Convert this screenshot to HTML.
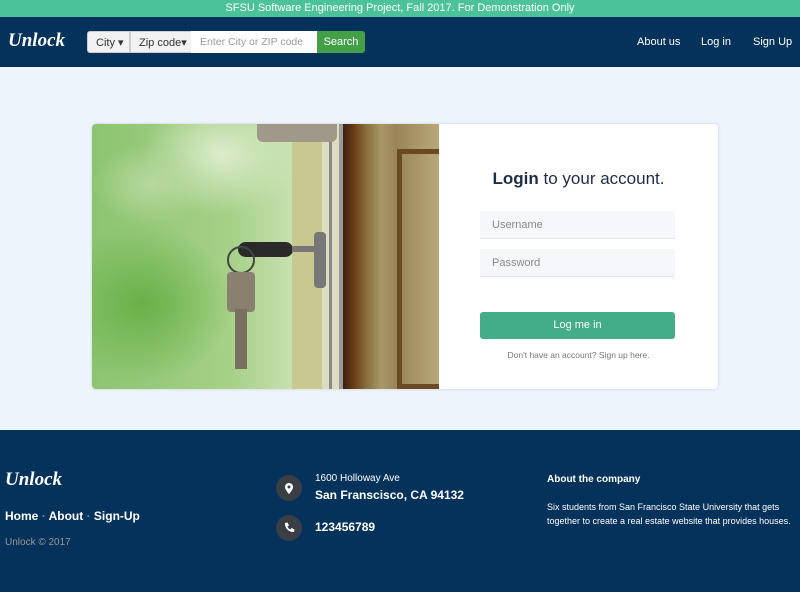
<!DOCTYPE html>
<html><head><style>
*{margin:0;padding:0;box-sizing:border-box}
body{width:800px;height:592px;overflow:hidden;font-family:"Liberation Sans",sans-serif;background:#eef4fb;position:relative}
.top{position:absolute;left:0;top:0;width:800px;height:17px;background:#4cc29a;color:#fff;font-size:11px;text-align:center;line-height:17px}
.nav{position:absolute;left:0;top:17px;width:800px;height:50px;background:#05325a;border-bottom:1px solid #0a2846}
.logo{position:absolute;font-family:"Liberation Serif",serif;font-style:italic;font-weight:bold;color:#fff;font-size:19px}
.sb{position:absolute;top:14px;height:22px;font-size:11px;line-height:22px}
.nav a{position:absolute;top:19px;color:#fff;font-size:11px;text-decoration:none}
.card{position:absolute;left:92px;top:124px;width:626px;height:265px;background:#fff;border-radius:4px;box-shadow:0 0 3px rgba(0,0,0,.15);overflow:hidden}
.img{position:absolute;left:0;top:0;width:347px;height:265px;background:radial-gradient(ellipse 60px 40px at 60px 60px,#b8d8a0,transparent),radial-gradient(ellipse 80px 60px at 130px 30px,#dceccc,transparent),radial-gradient(ellipse 90px 80px at 50px 180px,#68b048,transparent),linear-gradient(90deg,#8cc470,#a6d088 40%,#c8e0b0 58%,#d8e4c0)}
.in{position:absolute;left:388px;width:195px;height:28px;background:#f5f7fb;border-bottom:1px solid #e3e8ef;font-size:11px;color:#888;padding:8px 12px}
.foot{position:absolute;left:0;top:430px;width:800px;height:162px;background:#05325a;color:#fff}
.ic{position:absolute;width:26px;height:26px;border-radius:50%;background:#3a3f45}
</style></head><body>
<div class="top">SFSU Software Engineering Project, Fall 2017. For Demonstration Only</div>
<div class="nav">
<div class="logo" style="left:8px;top:13px">Unlock</div>
<div class="sb" style="left:87px;width:43px;background:#f2f2f2;border:1px solid #ccc;border-radius:3px 0 0 3px;color:#333;padding-left:8px">City ▾</div>
<div class="sb" style="left:130px;width:62px;background:#f2f2f2;border:1px solid #ccc;color:#333;padding-left:8px">Zip code▾</div>
<div class="sb" style="left:191px;width:127px;background:#fff;color:#999;padding-left:9px;font-size:10.5px">Enter City or ZIP code</div>
<div class="sb" style="left:317px;width:48px;background:#43a047;color:#fff;border-radius:0 3px 3px 0;text-align:center">Search</div>
<a style="left:637px">About us</a><a style="left:701px">Log in</a><a style="left:753px">Sign Up</a>
</div>
<div class="card">
<div class="img">
<div style="position:absolute;left:200px;top:0;width:30px;height:265px;background:#c8c890"></div>
<div style="position:absolute;left:230px;top:0;width:20px;height:265px;background:#dcdcc0"></div>
<div style="position:absolute;left:237px;top:0;width:3px;height:265px;background:#888"></div>
<div style="position:absolute;left:247px;top:0;width:4px;height:265px;background:#999"></div>
<div style="position:absolute;left:251px;top:0;width:96px;height:265px;background:linear-gradient(90deg,#3a2010,#6a4018 12%,#8a7040 25%,#a89868 40%,#9a8458 55%,#b8a878)"></div>
<div style="position:absolute;left:305px;top:25px;width:42px;height:240px;border:5px solid #6a4a22;border-right:none"></div>
<div style="position:absolute;left:165px;top:0;width:80px;height:18px;background:#a09888;border-radius:0 0 6px 6px"></div>
<div style="position:absolute;left:146px;top:118px;width:55px;height:15px;background:#2a2a2a;border-radius:8px"></div>
<div style="position:absolute;left:200px;top:122px;width:30px;height:6px;background:#777"></div>
<div style="position:absolute;left:222px;top:108px;width:12px;height:56px;background:#777;border-radius:4px"></div>
<div style="position:absolute;left:135px;top:122px;width:28px;height:28px;border:2px solid #444;border-radius:50%"></div>
<div style="position:absolute;left:135px;top:148px;width:28px;height:40px;background:#8a8070;border-radius:4px"></div>
<div style="position:absolute;left:143px;top:185px;width:12px;height:60px;background:#7a7060"></div>
</div>
<div style="position:absolute;left:347px;width:279px;top:45px;text-align:center;font-size:17px;color:#1e2d45"><b>Login</b> to your account.</div>
<div class="in" style="top:87px">Username</div>
<div class="in" style="top:125px">Password</div>
<div style="position:absolute;left:388px;top:188px;width:195px;height:27px;background:#42ad88;border-radius:3px;color:#fff;font-size:11px;text-align:center;line-height:27px">Log me in</div>
<div style="position:absolute;left:347px;width:279px;top:226px;text-align:center;font-size:8.5px;color:#777">Don't have an account? Sign up here.</div>
</div>
<div class="foot">
<div class="logo" style="left:5px;top:39px;font-size:19px">Unlock</div>
<div style="position:absolute;left:5px;top:79px;font-size:12px;font-weight:bold">Home <span style="color:#3aa0c0">·</span> About <span style="color:#3aa0c0">·</span> Sign-Up</div>
<div style="position:absolute;left:5px;top:107px;font-size:10px;color:#999">Unlock © 2017</div>
<div class="ic" style="left:276px;top:45px"><svg width="26" height="26" viewBox="0 0 26 26"><path d="M13 8a4 4 0 0 0-4 4c0 3 4 7 4 7s4-4 4-7a4 4 0 0 0-4-4z" fill="#fff"/><circle cx="13" cy="12" r="1.5" fill="#3a3f45"/></svg></div>
<div class="ic" style="left:276px;top:85px"><svg width="26" height="26" viewBox="0 0 26 26"><path d="M9 8l2.5-.5 1.5 3-1.5 1c.5 1.5 1.5 2.5 3 3l1-1.5 3 1.5-.5 2.5c-5 .5-9.5-4-9-9z" fill="#fff"/></svg></div>
<div style="position:absolute;left:315px;top:43px;font-size:10px">1600 Holloway Ave</div>
<div style="position:absolute;left:315px;top:58px;font-size:12px;font-weight:bold">San Franscisco, CA 94132</div>
<div style="position:absolute;left:315px;top:90px;font-size:12px;font-weight:bold">123456789</div>
<div style="position:absolute;left:547px;top:44px;font-size:10px;font-weight:bold">About the company</div>
<div style="position:absolute;left:547px;top:70px;width:250px;font-size:9px;line-height:14px">Six students from San Francisco State University that gets together to create a real estate website that provides houses.</div>
</div>
</body></html>
